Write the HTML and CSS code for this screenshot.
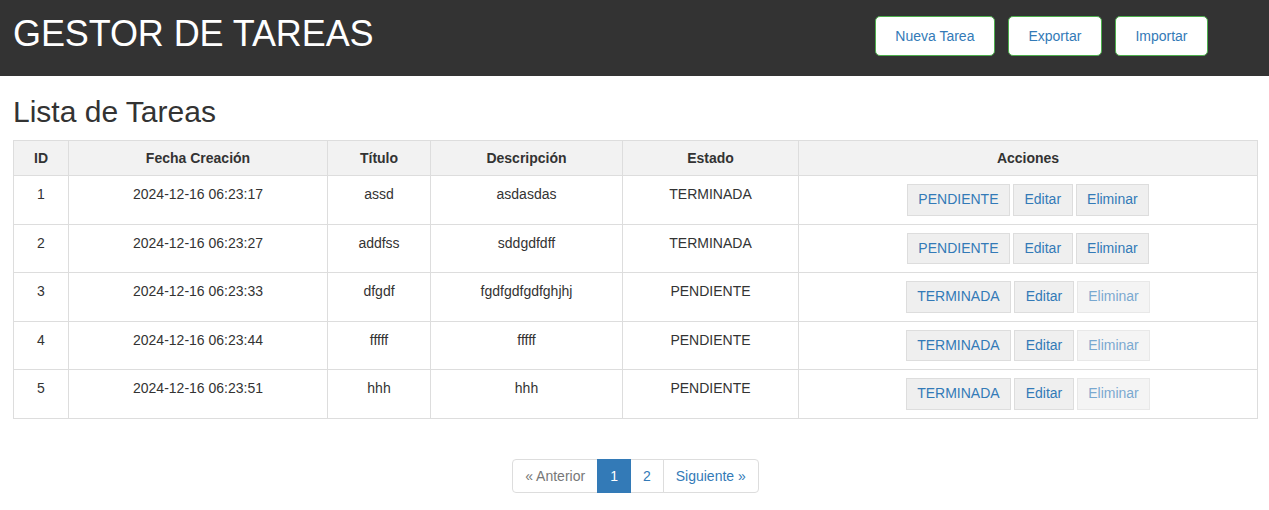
FILE: index.html
```html
<!DOCTYPE html>
<html lang="es">
<head>
<meta charset="utf-8">
<title>Gestor de Tareas</title>
<link rel="stylesheet" href="styles.css">
</head>
<body>
<header class="topbar">
  <h1 class="brand">GESTOR DE TAREAS</h1>
  <div class="top-actions">
    <button class="top-btn">Nueva Tarea</button>
    <button class="top-btn">Exportar</button>
    <button class="top-btn">Importar</button>
  </div>
</header>
<main class="content">
  <h2 class="page-title">Lista de Tareas</h2>
  <table class="tasks">
    <colgroup>
      <col class="c-id"><col class="c-fecha"><col class="c-titulo"><col class="c-desc"><col class="c-estado"><col class="c-acc">
    </colgroup>
    <thead>
      <tr><th>ID</th><th>Fecha Creación</th><th>Título</th><th>Descripción</th><th>Estado</th><th>Acciones</th></tr>
    </thead>
    <tbody>
      <tr><td>1</td><td>2024-12-16 06:23:17</td><td>assd</td><td>asdasdas</td><td>TERMINADA</td>
        <td><div class="acts"><button class="btn">PENDIENTE</button><button class="btn">Editar</button><button class="btn">Eliminar</button></div></td></tr>
      <tr><td>2</td><td>2024-12-16 06:23:27</td><td>addfss</td><td>sddgdfdff</td><td>TERMINADA</td>
        <td><div class="acts"><button class="btn">PENDIENTE</button><button class="btn">Editar</button><button class="btn">Eliminar</button></div></td></tr>
      <tr><td>3</td><td>2024-12-16 06:23:33</td><td>dfgdf</td><td>fgdfgdfgdfghjhj</td><td>PENDIENTE</td>
        <td><div class="acts"><button class="btn">TERMINADA</button><button class="btn">Editar</button><button class="btn" disabled>Eliminar</button></div></td></tr>
      <tr><td>4</td><td>2024-12-16 06:23:44</td><td>fffff</td><td>fffff</td><td>PENDIENTE</td>
        <td><div class="acts"><button class="btn">TERMINADA</button><button class="btn">Editar</button><button class="btn" disabled>Eliminar</button></div></td></tr>
      <tr><td>5</td><td>2024-12-16 06:23:51</td><td>hhh</td><td>hhh</td><td>PENDIENTE</td>
        <td><div class="acts"><button class="btn">TERMINADA</button><button class="btn">Editar</button><button class="btn" disabled>Eliminar</button></div></td></tr>
    </tbody>
  </table>
  <nav class="pager-wrap">
    <ul class="pager">
      <li class="pg disabled"><span>« Anterior</span></li>
      <li class="pg active"><span>1</span></li>
      <li class="pg"><span>2</span></li>
      <li class="pg"><span>Siguiente »</span></li>
    </ul>
  </nav>
</main>
</body>
</html>
```
FILE: styles.css
```css
* { box-sizing: border-box; }
html, body { margin: 0; padding: 0; }
body {
  font-family: "Liberation Sans", Arial, Helvetica, sans-serif;
  font-size: 14px;
  line-height: 20px;
  color: #333;
  background: #fff;
}
.topbar {
  height: 76px;
  background: #333;
  display: flex;
  align-items: flex-start;
  padding: 14px 61px 0 13px;
}
.brand {
  margin: 0;
  font-size: 36px;
  line-height: 40px;
  font-weight: 400;
  color: #fff;
  letter-spacing: -0.1px;
}
.top-actions {
  margin-left: auto;
  margin-top: 2px;
  display: flex;
  gap: 13px;
}
.top-btn {
  font-family: inherit;
  font-size: 14px;
  line-height: 20px;
  padding: 9px 19.5px;
  height: 40px;
  background: #fff;
  color: #337ab7;
  border: 1px solid #4cae4c;
  border-radius: 5px;
}
.content {
  padding: 0 11px 0 13px;
}
.page-title {
  margin: 19px 0 12px;
  font-size: 30px;
  line-height: 33px;
  font-weight: 400;
}
.tasks {
  width: 100%;
  table-layout: fixed;
  border-collapse: collapse;
  border: 1px solid #ddd;
}
.c-id { width: 55px; }
.c-fecha { width: 259px; }
.c-titulo { width: 103px; }
.c-desc { width: 192px; }
.c-estado { width: 176px; }
.tasks th, .tasks td {
  border: 1px solid #ddd;
  text-align: center;
  vertical-align: top;
}
.tasks th {
  background: #f2f2f2;
  font-weight: 700;
  padding: 8px;
  line-height: 18px;
}
.tasks td {
  padding: 8px;
  line-height: 20px;
}
.acts {
  display: flex;
  justify-content: center;
  gap: 3px;
}
.btn {
  font-family: inherit;
  font-size: 14px;
  line-height: 19.6px;
  padding: 5px 10.5px;
  background: #efefef;
  color: #337ab7;
  border: 1px solid #ddd;
  border-radius: 0;
  margin: 0;
}
.btn:disabled {
  opacity: 0.65;
}
.pager-wrap {
  display: flex;
  justify-content: center;
  margin-top: 40px;
}
.pager {
  list-style: none;
  margin: 0;
  padding: 0;
  display: flex;
}
.pg span {
  display: block;
  padding: 6px 12px;
  line-height: 20px;
  border: 1px solid #ddd;
  margin-left: -1px;
  color: #337ab7;
  background: #fff;
}
.pg:first-child span {
  margin-left: 0;
  border-radius: 4px 0 0 4px;
}
.pg:last-child span { border-radius: 0 4px 4px 0; }
.pg.disabled span { color: #777; }
.pg.active span {
  background: #337ab7;
  border-color: #337ab7;
  color: #fff;
  position: relative;
  z-index: 1;
}
```
